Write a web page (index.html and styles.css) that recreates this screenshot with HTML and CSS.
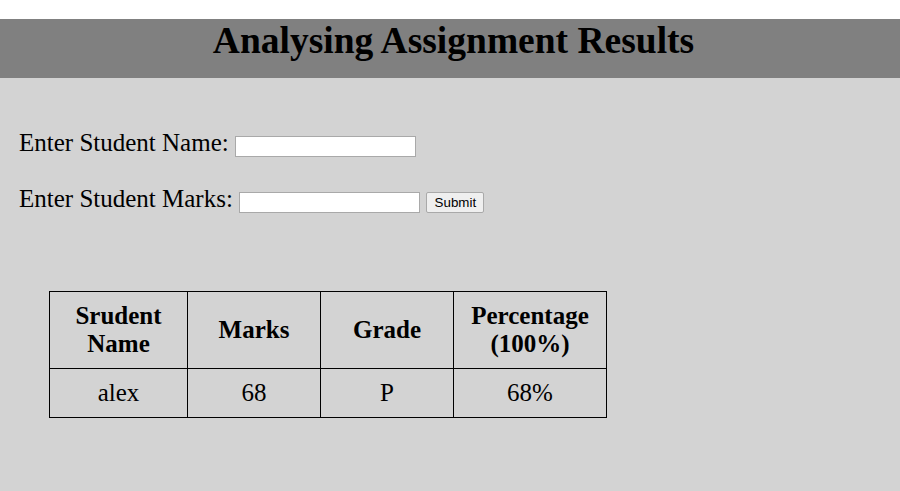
FILE: index.html
```html
<!DOCTYPE html>
<html>
<head>
<meta charset="utf-8">
<title>Analysing Assignment Results</title>
<link rel="stylesheet" href="styles.css">
</head>
<body>
<header class="banner">
  <h1 class="title">Analysing Assignment Results</h1>
</header>
<main class="content">
  <form class="entry">
    <div class="row">Enter Student Name: <input class="field" type="text"></div>
    <div class="row">Enter Student Marks: <input class="field" type="text"> <button class="submit" type="button">Submit</button></div>
  </form>
  <table class="results">
    <colgroup>
      <col class="c1"><col class="c2"><col class="c3"><col class="c4">
    </colgroup>
    <thead>
      <tr><th>Srudent Name</th><th>Marks</th><th>Grade</th><th>Percentage (100%)</th></tr>
    </thead>
    <tbody>
      <tr><td>alex</td><td>68</td><td>P</td><td>68%</td></tr>
    </tbody>
  </table>
</main>
</body>
</html>
```
FILE: styles.css
```css
html {
  background: #ffffff;
}
body {
  margin: 19px 0 0 0;
  min-height: calc(100vh - 19px);
  background: #d3d3d3;
  font-family: "Liberation Serif", "Times New Roman", serif;
  color: #000;
}
.banner {
  background: #808080;
  height: 59px;
  box-sizing: border-box;
  padding: 0 0 0 7px;
}
.title {
  margin: 0;
  font-size: 37.5px;
  font-weight: bold;
  text-align: center;
}
.content {
  padding: 51px 0 0 19px;
}
.entry {
  display: flex;
  flex-direction: column;
  gap: 28px;
  margin: 0;
}
.row {
  font-size: 25px;
}
.field {
  box-sizing: border-box;
  width: 181px;
  height: 21px;
  border: 1px solid #a9a9a9;
  background: #fff;
  padding: 1px 2px;
  font: 13.33px "Liberation Sans", Arial, sans-serif;
  vertical-align: baseline;
}
.submit {
  box-sizing: border-box;
  height: 21px;
  width: 58px;
  padding: 1px 6px;
  border: 1px solid #a9a9a9;
  border-radius: 2px;
  background: #efefef;
  font: 13.33px "Liberation Sans", Arial, sans-serif;
  color: #000;
  margin-left: 0;
}
.results {
  margin: 78px 0 0 30px;
  border-collapse: collapse;
  table-layout: fixed;
  width: 557px;
  font-size: 25px;
}
.c1 { width: 138px; }
.c2 { width: 133px; }
.c3 { width: 133px; }
.c4 { width: 153px; }
.results th,
.results td {
  border: 1px solid #000;
  padding: 10px;
  text-align: center;
  vertical-align: middle;
}
.results th {
  font-weight: bold;
}
```
